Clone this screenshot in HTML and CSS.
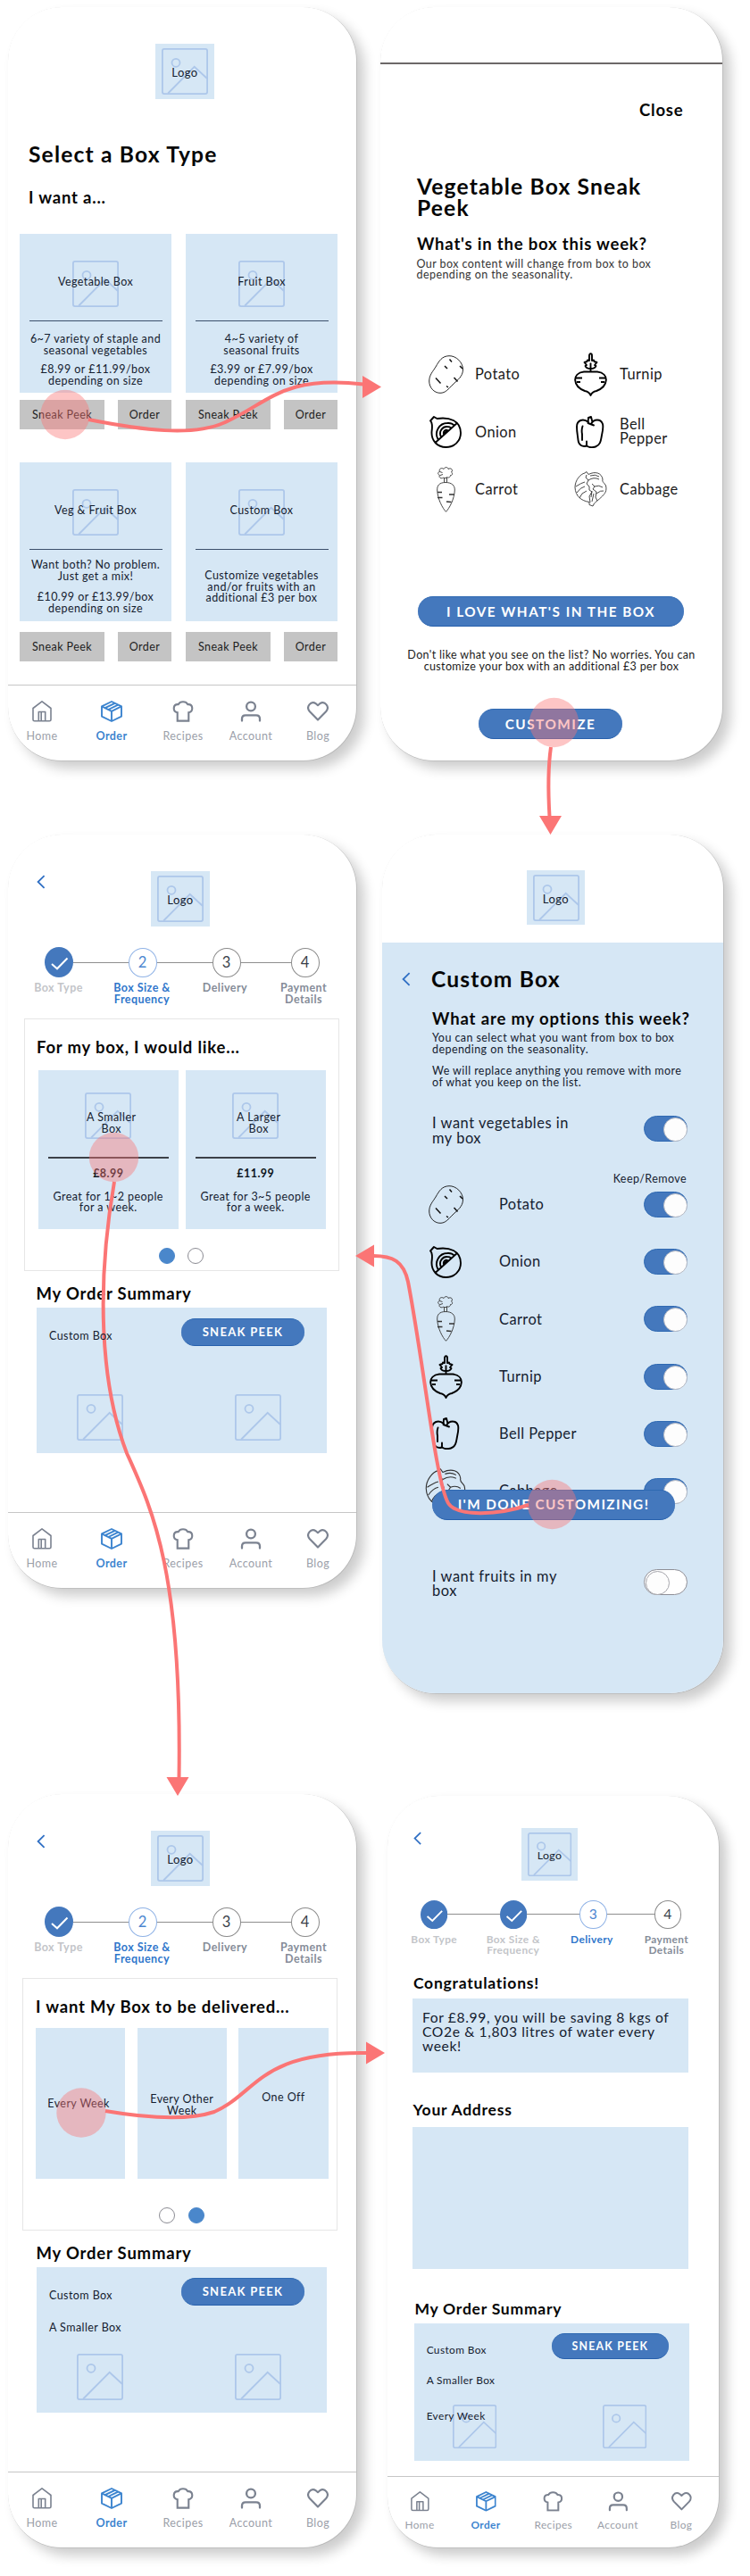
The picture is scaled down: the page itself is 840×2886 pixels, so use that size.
FILE: index.html
```html
<!DOCTYPE html>
<html lang="en">
<head>
<meta charset="utf-8">
<title>Box ordering flow</title>
<link rel="stylesheet" href="styles.css">
</head>
<body>
<svg class="defs" aria-hidden="true">
  <symbol id="pic" viewBox="0 0 52 52"><g fill="none" stroke="#adc7ea" stroke-width="1.8"><rect x=".9" y=".9" width="50.2" height="50.2" rx="2"/><circle cx="16" cy="16.3" r="4.5"/><path d="M7.2 50.5 36.7 20.8 51 34"/></g></symbol>
  <symbol id="back" viewBox="0 0 10 16"><path d="M8.6 1.2 1.6 8l7 6.8" fill="none" stroke="#2f6fc4" stroke-width="1.8"/></symbol>
  <symbol id="check" viewBox="0 0 32 34"><ellipse cx="16" cy="17" rx="16" ry="17" fill="#4478bd"/><path d="M8 19l6 5.300L25.500 12.500" fill="none" stroke="#fff" stroke-width="2"/></symbol>
  <symbol id="home" viewBox="0 0 24 24"><g fill="none" stroke="#7b8290" stroke-width="1.6" stroke-linejoin="round"><path d="M2 8.500 12 .900l10 7.600V21.200a1.600 1.600 0 0 1-1.600 1.600H3.600A1.600 1.600 0 0 1 2 21.200Z"/><path d="M8.300 22.800V12.500h7.400v10.300M11.200 22.800V12.500"/></g></symbol>
  <symbol id="cube" viewBox="0 0 24 24"><g fill="none" stroke="#3c84cf" stroke-width="1.900" stroke-linejoin="round"><path d="M12 1 23 6.400v11.200L12 23 1 17.600V6.400Z"/><path d="M1 6.400 12 11.800 23 6.400M12 11.800V23M4.700 8.200 15.700 2.800M8.300 10 19.300 4.600"/></g></symbol>
  <symbol id="chef" viewBox="0 0 24 26"><path d="M5.200 24.500V14.300C-1 13-.4 4 6.200 4.500 8.500.3 15.500.3 17.800 4.500 24.400 4 25 13 18.800 14.300v10.200Z" fill="none" stroke="#7b8290" stroke-width="2.300"/></symbol>
  <symbol id="user" viewBox="0 0 24 24"><g fill="none" stroke="#7b8290" stroke-width="2.300"><circle cx="12" cy="6.500" r="4.900"/><path d="M2 22.500v-2.200c0-2.500 1.500-4 4-4h12c2.500 0 4 1.500 4 4v2.200" stroke-linecap="round"/></g></symbol>
  <symbol id="heart" viewBox="0 0 26 24"><path d="M13 22.300 3.200 12.300C-2 6.300 4.500-1.500 10.800 2.700L13 4.700l2.200-2C21.500-1.500 28 6.300 22.800 12.300Z" fill="none" stroke="#7b8290" stroke-width="2.300" stroke-linejoin="round"/></symbol>
  <symbol id="potato" viewBox="0 0 39 43"><g fill="none" stroke="#111" stroke-width=".9"><path d="M23 .7C31 .5 38.500 8 38.500 16 38.500 24 32 28 27 33 22 38 19 42.300 13 42.300 6 42.300.700 36 .700 29 .700 22 5 18 8 13 12 6 15 1 23 .7Z"/><path stroke-width="1.500" d="M23.500 4.500 26 7.500M18 12l3 3M35 12l3 3M8 25.500l5.500 6M28.500 25l4 4.500M20 34.500l2 1.500"/></g></symbol>
  <symbol id="turnip" viewBox="0 0 37 49"><g fill="none" stroke="#000" stroke-width="1.900" stroke-linejoin="round"><path d="M11 21.500h15C40 23 38.500 38 25 43q-5 1-6.500 5Q17 44 12 43C-1.500 38-3 23 11 21.500Z"/><path d="M18.500 21.500V11.500M18.500 18q-5 0-6-3l1.500-1-2.500-3 3-1 .5-1.500 2 .5V3.500c0-3 3-3 3 0V9l2-.5.500 1.500 3 1-2.500 3 1.500 1q-1 3-6 3ZM2 28.500h7M3 33h4M28 28.500h7M30 33h4"/></g></symbol>
  <symbol id="onion" viewBox="0 0 36 36"><g fill="none" stroke="#000" stroke-width="1.900" stroke-linejoin="round"><path d="M1 5.500 5 1 8.500 3C22 1 35 5 35 19c0 9-7 16-16.500 16S2 28 2.500 18C3 13 4 8 1 5.500ZM7 29.500 31.500 7.500M9.500 26C5 18 11 8 20 8q5-.5 7.500 2.500M12.800 23C10 17 15 11.500 20 12q3 0 4 1.500M16 20.500c-1-4 2-5.500 4.500-4.500M16 20.500l4-4.500"/></g></symbol>
  <symbol id="pepper" viewBox="0 0 32 36"><g fill="none" stroke="#000" stroke-width="1.900" stroke-linejoin="round" stroke-linecap="round"><path d="M14 7C8 2 1 5 1 12c0 6 1 10 1.500 15 .5 6 5 8 9.500 6.500 3 2 7 2 10 1 6-2 6-8 7-13C30 17 31 13 30 9 28 3 20 3 17 9M14 2l3-1 1.500 6M14 2l-.5 6L20 10.500M12 33v-4.500M7.500 11.500q-1.500 4-.5 9V27"/></g></symbol>
  <symbol id="carrot" viewBox="0 0 21 51"><g fill="none" stroke="#333" stroke-width=".9"><path d="M10 17.500C3 17.500.500 21 .700 26 1 36 7 47 10.500 50.300 14 47 20 36 20.300 26 20.500 21 17 17.500 10 17.500ZM8.500 17.500V13M11.500 17.500V13M8 12.500h4M8 12c-3 2-6 0-4.500-2.500C1 8.500 1 6 3.500 5.500 2 2 6 .5 8 2.500c1-2.500 5-2.500 5 0 3-2 6 1 3.500 3.500 2 1 1 4-1 3.500 0 2.500-3 3.500-4.500 1.500M4 9.500l3-1M3.500 5.500l3 1"/><path stroke-width="1.400" d="M1 28.500h5M1 34.500h5.500M14 31h6M11 39l5.500.500"/></g></symbol>
  <symbol id="cabbage" viewBox="0 0 37 40"><g fill="none" stroke="#333" stroke-width=".9" stroke-linejoin="round"><path d="M12 2 14 .5l2 3C24-.5 31 2 32 9c-1 3 2 4 3.500 7 1.500 6-1 9-4 12-4 4-7 6-9 8l-1.500 3-4-1.500v-3C8 33 1.500 28 1 18 1 10 7 3 12 2Z"/><path d="M14 4l-1 3 3 3-2 4 3 3v4l3 2-3 5 1 7M16 10q6-4 12-1M18 5q6-2 10 1M2 17q6-4 10-5M3 24q4-6 9-7M6 30q2-6 8-8M20 14l3 3-2 3 4 3-1 6 2 4M23 17q5-2 9 1M25 25q5-4 8-3M20 22l-1 7M22 25l-2 9"/></g></symbol>
</svg>
<main class="board">
<div class="column column-left">

<section class="phone select">
  <div class="logo"><svg><use href="#pic"/></svg><span>Logo</span></div>
  <h1 class="t-xl">Select a Box Type</h1>
  <h2 class="t-lg">I want a...</h2>
  <div class="boxes">
    <article class="box">
      <div class="card"><div class="pic"><svg><use href="#pic"/></svg><span>Vegetable Box</span></div><hr>
      <p>6~7 variety of staple and<br>seasonal vegetables</p><p class="price">£8.99 or £11.99/box<br>depending on size</p></div>
      <div class="actions"><span>Sneak Peek</span><span>Order</span></div>
    </article>
    <article class="box">
      <div class="card"><div class="pic"><svg><use href="#pic"/></svg><span>Fruit Box</span></div><hr>
      <p>4~5 variety of<br>seasonal fruits</p><p class="price">£3.99 or £7.99/box<br>depending on size</p></div>
      <div class="actions"><span>Sneak Peek</span><span>Order</span></div>
    </article>
    <article class="box mix">
      <div class="card"><div class="pic"><svg><use href="#pic"/></svg><span>Veg &amp; Fruit Box</span></div><hr>
      <p>Want both? No problem.<br>Just get a mix!</p><p class="price">£10.99 or £13.99/box<br>depending on size</p></div>
      <div class="actions"><span>Sneak Peek</span><span>Order</span></div>
    </article>
    <article class="box custom">
      <div class="card"><div class="pic"><svg><use href="#pic"/></svg><span>Custom Box</span></div><hr>
      <p>Customize vegetables<br>and/or fruits with an<br>additional £3 per box</p></div>
      <div class="actions"><span>Sneak Peek</span><span>Order</span></div>
    </article>
  </div>
  <nav class="nav"><a><svg><use href="#home"/></svg>Home</a><a class="on"><svg><use href="#cube"/></svg>Order</a><a><svg><use href="#chef"/></svg>Recipes</a><a><svg><use href="#user"/></svg>Account</a><a><svg><use href="#heart"/></svg>Blog</a></nav>
</section>

<section class="phone size">
  <header class="top"><svg class="back"><use href="#back"/></svg><div class="logo"><svg><use href="#pic"/></svg><span>Logo</span></div></header>
  <div class="steps"><svg class="done"><use href="#check"/></svg><i></i><b class="now">2</b><i></i><b>3</b><i></i><b>4</b></div>
  <div class="labels"><span class="past">Box Type</span><span class="now">Box Size &amp;<br>Frequency</span><span>Delivery</span><span>Payment<br>Details</span></div>
  <div class="panel">
    <h2 class="t-lg">For my box, I would like...</h2>
    <div class="sizes">
      <div class="card"><div class="pic"><svg><use href="#pic"/></svg><span>A Smaller<br>Box</span></div><hr><strong>£8.99</strong><p>Great for 1~2 people<br>for a week.</p></div>
      <div class="card"><div class="pic"><svg><use href="#pic"/></svg><span>A Larger<br>Box</span></div><hr><strong>£11.99</strong><p>Great for 3~5 people<br>for a week.</p></div>
    </div>
    <div class="dots"><i class="on"></i><i></i></div>
  </div>
  <h2 class="t-lg sum-title">My Order Summary</h2>
  <div class="summary"><div class="sum-row"><div class="sum-items"><span>Custom Box</span></div><span class="btn small">SNEAK PEEK</span></div><div class="sum-pics"><svg><use href="#pic"/></svg><svg><use href="#pic"/></svg></div></div>
  <nav class="nav"><a><svg><use href="#home"/></svg>Home</a><a class="on"><svg><use href="#cube"/></svg>Order</a><a><svg><use href="#chef"/></svg>Recipes</a><a><svg><use href="#user"/></svg>Account</a><a><svg><use href="#heart"/></svg>Blog</a></nav>
</section>

<section class="phone frequency">
  <header class="top"><svg class="back"><use href="#back"/></svg><div class="logo"><svg><use href="#pic"/></svg><span>Logo</span></div></header>
  <div class="steps"><svg class="done"><use href="#check"/></svg><i></i><b class="now">2</b><i></i><b>3</b><i></i><b>4</b></div>
  <div class="labels"><span class="past">Box Type</span><span class="now">Box Size &amp;<br>Frequency</span><span>Delivery</span><span>Payment<br>Details</span></div>
  <div class="panel">
    <h2 class="t-lg">I want My Box to be delivered...</h2>
    <div class="periods"><div class="week">Every Week</div><div class="other">Every Other<br>Week</div><div class="once">One Off</div></div>
    <div class="dots"><i></i><i class="on"></i></div>
  </div>
  <h2 class="t-lg sum-title">My Order Summary</h2>
  <div class="summary"><div class="sum-row"><div class="sum-items"><span>Custom Box</span><span>A Smaller Box</span></div><span class="btn small">SNEAK PEEK</span></div><div class="sum-pics"><svg><use href="#pic"/></svg><svg><use href="#pic"/></svg></div></div>
  <nav class="nav"><a><svg><use href="#home"/></svg>Home</a><a class="on"><svg><use href="#cube"/></svg>Order</a><a><svg><use href="#chef"/></svg>Recipes</a><a><svg><use href="#user"/></svg>Account</a><a><svg><use href="#heart"/></svg>Blog</a></nav>
</section>
</div>

<div class="column column-right">
<section class="phone peek">
  <div class="sheet-line"></div>
  <div class="close t-lg">Close</div>
  <h1 class="t-xl">Vegetable Box Sneak<br>Peek</h1>
  <h2 class="t-lg">What's in the box this week?</h2>
  <p class="note">Our box content will change from box to box<br>depending on the seasonality.</p>
  <ul class="veg-grid">
    <li><svg class="i-potato"><use href="#potato"/></svg><span>Potato</span></li>
    <li><svg class="i-turnip"><use href="#turnip"/></svg><span>Turnip</span></li>
    <li><svg class="i-onion"><use href="#onion"/></svg><span>Onion</span></li>
    <li><svg class="i-pepper"><use href="#pepper"/></svg><span class="two">Bell<br>Pepper</span></li>
    <li><svg class="i-carrot"><use href="#carrot"/></svg><span>Carrot</span></li>
    <li><svg class="i-cabbage"><use href="#cabbage"/></svg><span>Cabbage</span></li>
  </ul>
  <div class="btn love">I LOVE WHAT'S IN THE BOX</div>
  <p class="ask">Don't like what you see on the list? No worries. You can<br>customize your box with an additional £3 per box</p>
  <div class="btn customize">CUSTOMIZE</div>
</section>

<section class="phone options">
  <div class="logo"><svg><use href="#pic"/></svg><span>Logo</span></div>
  <div class="sheet">
    <header><svg class="back"><use href="#back"/></svg><h1 class="t-xl">Custom Box</h1></header>
    <h2 class="t-lg">What are my options this week?</h2>
    <p>You can select what you want from box to box<br>depending on the seasonality.</p>
    <p class="second">We will replace anything you remove with more<br>of what you keep on the list.</p>
    <div class="toggle-row"><span>I want vegetables in<br>my box</span><i class="toggle on"></i></div>
    <div class="keep">Keep/Remove</div>
    <ul class="veg-list">
      <li><svg class="i-potato"><use href="#potato"/></svg><span>Potato</span><i class="toggle on"></i></li>
      <li><svg class="i-onion"><use href="#onion"/></svg><span>Onion</span><i class="toggle on"></i></li>
      <li><svg class="i-carrot"><use href="#carrot"/></svg><span>Carrot</span><i class="toggle on"></i></li>
      <li><svg class="i-turnip"><use href="#turnip"/></svg><span>Turnip</span><i class="toggle on"></i></li>
      <li><svg class="i-pepper"><use href="#pepper"/></svg><span>Bell Pepper</span><i class="toggle on"></i></li>
      <li><svg class="i-cabbage"><use href="#cabbage"/></svg><span>Cabbage</span><i class="toggle on"></i></li>
    </ul>
    <div class="btn finish">I'M DONE CUSTOMIZING!</div>
    <div class="toggle-row fruit"><span>I want fruits in my<br>box</span><i class="toggle"></i></div>
  </div>
</section>

<section class="phone delivery">
  <header class="top"><svg class="back"><use href="#back"/></svg><div class="logo"><svg><use href="#pic"/></svg><span>Logo</span></div></header>
  <div class="steps"><svg class="done"><use href="#check"/></svg><i></i><svg class="done"><use href="#check"/></svg><i></i><b class="now">3</b><i></i><b>4</b></div>
  <div class="labels"><span class="past">Box Type</span><span class="past">Box Size &amp;<br>Frequency</span><span class="now">Delivery</span><span>Payment<br>Details</span></div>
  <h2 class="t-lg congrats">Congratulations!</h2>
  <p class="saving">For £8.99, you will be saving 8 kgs of<br>CO2e &amp; 1,803 litres of water every<br>week!</p>
  <h2 class="t-lg address-title">Your Address</h2>
  <div class="address"></div>
  <h2 class="t-lg sum-title">My Order Summary</h2>
  <div class="summary"><div class="sum-row"><div class="sum-items"><span>Custom Box</span><span>A Smaller Box</span><span class="third">Every Week</span></div><span class="btn small">SNEAK PEEK</span></div><div class="sum-pics"><svg><use href="#pic"/></svg><svg><use href="#pic"/></svg></div></div>
  <nav class="nav"><a><svg><use href="#home"/></svg>Home</a><a class="on"><svg><use href="#cube"/></svg>Order</a><a><svg><use href="#chef"/></svg>Recipes</a><a><svg><use href="#user"/></svg>Account</a><a><svg><use href="#heart"/></svg>Blog</a></nav>
</section>
</div>

<svg class="flow" viewBox="0 0 840 2886">
  <g fill="#fb7575" fill-opacity=".42"><circle cx="73" cy="464.500" r="27.700"/><circle cx="620.500" cy="809.500" r="27.700"/><circle cx="618.500" cy="1685.500" r="27.700"/><circle cx="127.500" cy="1296.500" r="27.700"/><circle cx="91" cy="2367" r="27.700"/></g>
  <g fill="none" stroke="#fb7575" stroke-width="4">
    <path d="M99 470C160 482 215 489 250 474 301 452 315 420 407 430.500"/>
    <path d="M617 837C613 865 614 890 615.500 915"/>
    <path d="M592 1686C560 1697 512 1700 502 1684 488 1660 475 1530 457 1436 452 1413 440 1407 418 1407"/>
    <path d="M128 1324C108 1440 112 1550 142 1628 170 1690 204 1760 200.500 1992"/>
    <path d="M118 2365C165 2373 210 2376 240 2366 288 2345 290 2298 411 2300"/>
  </g>
  <path fill="#fb7575" d="M406 421v25l21-12.500ZM604 914h25l-12.500 21ZM419 1394.500v25l-21-12.500ZM186.500 1991h25L199 2012ZM410 2287.500v25l21-12.500Z"/>
</svg>
</main>
</body>
</html>
```
FILE: styles.css
```css
* { box-sizing: border-box; margin: 0; padding: 0; }
body { background: #fff; color: #14202f; font-family: Lato, "Open Sans", sans-serif; font-size: 12.5px; line-height: 12.5px; letter-spacing: .43px; }
ul { list-style: none; }
svg { display: block; overflow: visible; }
.defs { position: absolute; width: 0; height: 0; }
.board { position: relative; display: flex; width: 840px; height: 2886px; overflow: hidden; white-space: nowrap; }
.flow { position: absolute; inset: 0; width: 840px; height: 2886px; }
.column { display: flex; flex-direction: column; padding-top: 8px; }
.column-left { width: 426px; padding-left: 9px; }

.phone { display: flex; flex-direction: column; align-items: flex-start; width: 390px; height: 844px; flex: none; border-radius: 60px; background: #fff; box-shadow: .5px .5px 0 .3px #b9b9b9, 9px 9px 14px rgba(0,0,0,.2); }
.t-xl { font-size: 24.6px; line-height: 24.6px; font-weight: 700; color: #060606; letter-spacing: 1.17px; }
.t-lg { font-size: 18.5px; line-height: 18.5px; font-weight: 700; color: #060606; letter-spacing: .8px; }

.logo { display: grid; place-items: center; width: 66px; height: 62px; background: #d6e7f5; font-size: 13px; }
.logo > *, .pic > * { grid-area: 1 / 1; }
.logo svg, .pic svg, .sum-pics svg { width: 52px; height: 52px; }
.logo span { padding-top: 3px; }

.select { padding: 41px 0 0 13px; }
.select > .logo { margin-left: 152px; }
.select .t-xl { margin: 50px 0 0 10px; }
.select .t-lg { margin: 26px 0 32px 10px; }
.boxes { display: grid; grid-template-columns: 170px 170px; gap: 37px 16px; }
.card { display: flex; flex-direction: column; align-items: center; height: 178px; background: #d6e7f5; text-align: center; }
.pic { display: grid; place-items: center; }
.box .pic { margin-top: 30px; }
.box .pic span { padding-bottom: 4px; }
.box hr { width: 149px; height: 1px; border: 0; background: #3b4f6b; margin: 15px 0 14px; }
.box .price { margin-top: 9px; }
.actions { display: flex; justify-content: space-between; margin-top: 8px; }
.actions span { display: grid; place-items: center; height: 33px; padding-top: 2px; background: #c4c4c4; color: #1c1c1c; width: 95px; }
.actions span + span { width: 60px; }
.mix hr { margin-bottom: 11px; }
.mix .price { margin-top: 11px; }
.custom hr { margin-bottom: 23px; }
.mix .actions, .custom .actions { margin-top: 12px; }

.nav { display: grid; grid-template-columns: 76px 80px 80px 72px 78px; width: 100%; height: 85px; margin-top: auto; border-top: 1.5px solid #c6c6c6; color: #9ba0a9; }
.select .nav { margin-left: -13px; width: 390px; }
.nav a { display: flex; flex-direction: column; align-items: center; padding-top: 17px; gap: 10px; }
.nav svg { width: 24px; height: 24px; }
.nav .on { color: #3c84cf; font-weight: 700; }

.size { margin-top: 83px; }
.frequency { margin-top: 231px; }
.top { display: flex; padding: 41px 0 0 32px; }
.back { width: 10px; height: 16px; flex: none; }
.top .back { margin-top: 4px; }
.top .logo { margin-left: 118px; }
.steps { display: flex; align-items: center; margin: 23px 0 0 40.5px; height: 34px; }
.steps .done { width: 32px; height: 34px; flex: none; }
.steps i { width: 62px; height: 1px; background: #8e8e8e; }
.steps i:last-of-type { width: 56px; }
.steps b { display: grid; place-items: center; width: 32px; height: 33px; border: 1px solid #8b8b8b; border-radius: 50%; font-weight: 400; font-size: 16.5px; letter-spacing: 0; color: #3a3f4a; }
.steps b.now { border-color: #8fb2e6; color: #4c86d0; }
.labels { display: grid; grid-template-columns: 93px 94px 92px 84px; margin: 6px 0 0 10px; height: 25px; text-align: center; font-weight: 700; color: #858c98; letter-spacing: .45px; }
.labels .past { color: #c3c5c9; }
.labels .now { color: #2f76cb; }
.panel { width: 353px; height: 283px; margin: 15px 0 0 18px; border: 1px solid #e6e6e6; padding: 21.5px 0 0 13px; }
.sizes { display: flex; gap: 8.5px; margin: 17px 0 0 2px; }
.sizes .card { width: 156.5px; }
.sizes .pic { margin-top: 25px; }
.sizes .pic span { padding: 17px 0 0 7px; }
.sizes hr { width: 135px; height: 2px; border: 0; background: #3c4148; margin-top: 20px; }
.sizes strong { margin: 11px 0 13px; color: #0c1420; }
.dots { display: flex; gap: 14.5px; margin: 21px 0 0 136.5px; }
.dots i { width: 18px; height: 18px; border: 1px solid #8b8b93; border-radius: 50%; }
.dots .on { background: #4a87cb; border-color: #4a87cb; }
.sum-title { margin: 15.5px 0 0 31.5px; }
.summary { width: 325px; height: 163px; margin: 7px 0 0 31.5px; background: #d6e7f5; }
.sum-row { display: flex; justify-content: space-between; height: 96.5px; padding: 12px 24.5px 0 14.5px; }
.sum-items { display: flex; flex-direction: column; gap: 24px; padding-top: 13.5px; position: relative; z-index: 1; }
.sum-pics { display: flex; gap: 125px; padding-left: 45.5px; }

.btn { display: grid; place-items: center; background: #4478bd; color: #fff; font-weight: 700; border-bottom: 1px solid #2760ac; border-top: 1px solid #2f69b2; border-radius: 17px; height: 34px; font-size: 15.3px; letter-spacing: 1.5px; }
.btn.small { width: 138px; height: 31px; font-size: 13px; letter-spacing: 1.3px; }

.frequency .panel { margin-left: 16px; padding-left: 14px; }
.periods { display: flex; gap: 13.5px; margin: 15px 0 0 0; }
.periods div { width: 100.2px; height: 169px; background: #d6e7f5; text-align: center; }
.periods .week { padding: 79px 4px 0 0; }
.periods .other { padding-top: 74px; }
.periods .once { padding-top: 72px; }
.frequency .dots { margin: 32px 0 0 138px; }

.peek { width: 383px; }
.sheet-line { width: 100%; height: 2px; margin-top: 62px; background: #6c6868; }
.close { margin: 42px 0 0 290px; }
.peek h1 { margin: 64px 0 0 41px; }
.peek h2 { margin: 18px 0 0 41px; }
.note { margin: 7.5px 0 0 40.5px; color: #333; }
.veg-grid { display: grid; grid-template-columns: 162px 180px; grid-auto-rows: 64.5px; margin: 72.5px 0 0 50px; font-size: 16.4px; line-height: 16.4px; color: #1a1a1a; }
.veg-grid li { display: grid; grid-template-columns: 46px auto; gap: 10px; align-items: center; justify-content: start; }
.veg-grid svg, .veg-list svg { justify-self: center; }
.veg-grid .two { margin-top: -1px; }
.i-potato { width: 39px; height: 43px; }
.i-turnip { width: 37px; height: 49px; }
.i-onion { width: 36px; height: 36px; }
.i-pepper { width: 32px; height: 36px; }
.i-carrot { width: 21px; height: 51px; }
.i-cabbage { width: 37px; height: 40px; }
.love { width: 298px; margin: 87.5px 0 0 42px; }
.ask { width: 100%; text-align: center; margin-top: 26px; color: #1a1a1a; letter-spacing: .35px; }
.customize { width: 161px; margin: 41px 0 0 110px; }

.options { width: 382px; height: 962px; margin: 83px 0 0 2px; overflow: hidden; }
.options > .logo { margin: 40px 0 20px 162px; width: 65px; height: 61px; }
.sheet { width: 100%; flex: 1; background: #d6e7f5; padding-left: 56px; position: relative; }
.sheet header { display: flex; align-items: center; gap: 23px; margin: 29px 0 0 -34px; }
.sheet h2 { margin: 22px 0 7px; letter-spacing: .86px; }
.sheet .second { margin-top: 12px; }
.toggle-row { display: flex; justify-content: space-between; margin: 31px 40px 0 0; font-size: 16.4px; line-height: 16.4px; letter-spacing: .55px; }
.toggle { width: 49px; height: 29px; border-radius: 15px; border: 1px solid #8e8e96; background: #fff; flex: none; }
.toggle::after { content: ""; display: block; width: 25px; height: 25px; margin: 1px; border: 1px solid #a5a5ab; border-radius: 50%; background: #fdfdfd; }
.toggle.on { background: #4478bd; border-color: #2f69b2; }
.toggle.on::after { margin-left: 21px; border-color: #b9bcc4; }
.keep { text-align: right; margin: 32px 41px 0 0; }
.veg-list { margin: -10px 40px 0 -10px; font-size: 16.4px; }
.veg-list li { display: grid; grid-template-columns: 50px 1fr 49px; column-gap: 35px; align-items: center; height: 64.2px; }
.veg-list .i-cabbage { width: 46px; height: 50px; }
.finish { position: absolute; left: 56px; top: 612.5px; width: 272px; letter-spacing: 1.4px; }
.fruit { margin-top: 55px; }

.delivery { width: 390.8px; height: 889px; margin: 121px 0 0 8.5px; zoom: .948; }
.delivery .top { padding: 38.5px 0 0 30.5px; }
.delivery .steps { margin-left: 39px; }
.delivery .labels { margin-left: 8.5px; }
.congrats { margin: 24px 0 9px 30.5px; }
.saving { width: 325.5px; height: 87.5px; margin-left: 30px; padding: 15px 0 0 11px; background: #d6e7f5; font-size: 16.5px; line-height: 16.5px; letter-spacing: .68px; }
.address-title { margin: 35px 0 11px 30px; }
.address { width: 325.5px; height: 168px; margin-left: 30px; background: #d6e7f5; }
.delivery .sum-title { margin: 38px 0 0 32px; }
.delivery .sum-items .third { margin-top: 5px; }
```
